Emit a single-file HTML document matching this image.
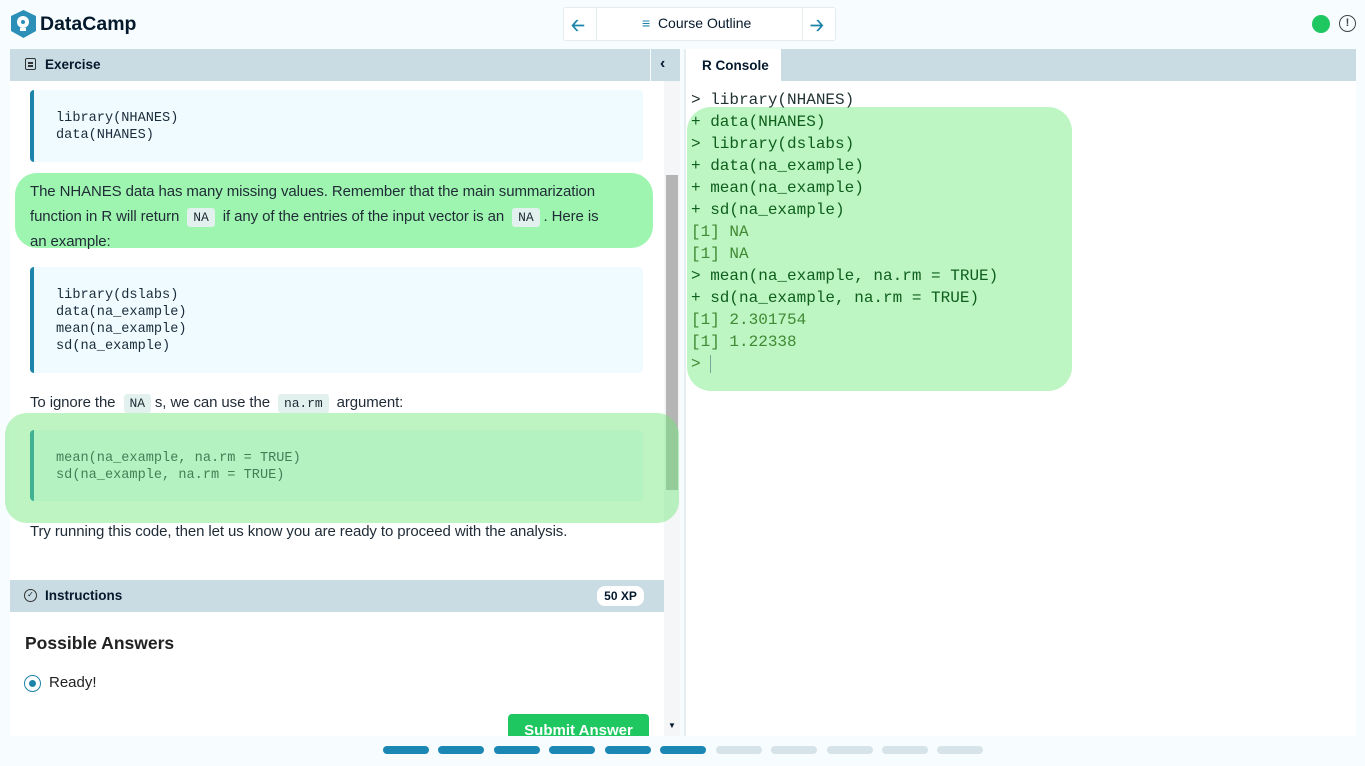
<!DOCTYPE html>
<html><head><meta charset="utf-8"><style>
*{box-sizing:border-box;margin:0;padding:0}
body{width:1365px;height:766px;overflow:hidden;background:#f7fdfe;font-family:"Liberation Sans",sans-serif;color:#05192d;position:relative}
.abs{position:absolute}
.hdr{background:#c9dce3}
.code{position:absolute;left:30px;width:613px;background:#effbfe;border-left:4px solid #1c84a9;border-radius:4px;font-family:"Liberation Mono",monospace;font-size:13.6px;line-height:17px;padding:0 0 0 22px;color:#1a2b3a;white-space:pre}
.p{position:absolute;left:30px;font-size:15px;line-height:25px;white-space:nowrap;color:#1f2b36;letter-spacing:-0.1px}
.na{font-family:"Liberation Mono",monospace;font-size:13px;background:#e3f1ee;padding:2px 6px;border-radius:3px;margin:0 4px}
.con{position:absolute;left:691px;font-family:"Liberation Mono",monospace;font-size:16px;line-height:22px;white-space:pre;color:#233}
.bar{position:absolute;top:746px;width:46px;height:8px;border-radius:4px}
</style></head><body>
<svg class="abs" style="left:10px;top:9px" width="27" height="30" viewBox="0 0 27 30"><path d="M13.5 1 L26 7 V22 L13.5 29 L1 22 V7Z" fill="#2b8fb7"/><circle cx="13" cy="13" r="6" fill="#fff"/><path d="M10 19h6v3h-6z" fill="#fff"/><circle cx="13" cy="13" r="2" fill="#2b8fb7"/></svg>
<div class="abs" style="left:40px;top:13px;font-size:19.5px;font-weight:bold;color:#05192d">DataCamp</div>
<div class="abs" style="left:563px;top:7px;width:273px;height:34px;border:1px solid #e4ecef;background:#fff;border-radius:3px"></div>
<div class="abs" style="left:596px;top:8px;width:1px;height:32px;background:#e4ecef"></div>
<div class="abs" style="left:802px;top:8px;width:1px;height:32px;background:#e4ecef"></div>
<div class="abs" style="left:571px;top:13px;color:#1c84a9;font-size:17px;font-weight:bold">&#129120;</div>
<div class="abs" style="left:810px;top:13px;color:#1c84a9;font-size:17px;font-weight:bold">&#129122;</div>
<div class="abs" style="left:642px;top:15px;font-size:14px;color:#05192d"><span style="color:#1c84a9">&#8801;</span>&nbsp; Course Outline</div>
<div class="abs" style="left:1312px;top:15px;width:18px;height:18px;border-radius:50%;background:#1ec760"></div>
<div class="abs" style="left:1339px;top:15px;width:17px;height:17px;border-radius:50%;border:1.5px solid #444;font-size:11px;text-align:center;line-height:14px;font-weight:bold;color:#444">!</div>
<div class="abs hdr" style="left:10px;top:49px;width:640px;height:32px"></div>
<div class="abs hdr" style="left:651px;top:49px;width:29px;height:32px"></div>
<div class="abs" style="left:660px;top:55px;font-size:16px;font-weight:bold">&#8249;</div>
<div class="abs" style="left:25px;top:58px;width:11px;height:12px;border:1.5px solid #333;border-radius:2px"></div>
<div class="abs" style="left:28px;top:62px;width:5px;height:1.5px;background:#333"></div>
<div class="abs" style="left:28px;top:65px;width:5px;height:1.5px;background:#333"></div>
<div class="abs" style="left:45px;top:57px;font-size:13.5px;font-weight:bold">Exercise</div>
<div class="abs" style="left:10px;top:81px;width:654px;height:655px;background:#fff"></div>
<div class="abs" style="left:664px;top:81px;width:16px;height:655px;background:#f4f6f7"></div>
<div class="abs" style="left:666px;top:175px;width:12px;height:315px;background:#b5b5b5"></div>
<div class="abs" style="left:668px;top:721px;font-size:8px">&#9660;</div>
<div class="abs" style="left:684px;top:49px;width:2px;height:690px;background:#e6eef1"></div>
<div class="code" style="top:90px;height:72px;padding-top:20px">library(NHANES)
data(NHANES)</div>
<div class="abs" style="left:15px;top:173px;width:638px;height:75px;background:#9ef5b0;border-radius:22px"></div>
<div class="p" style="top:179px">The NHANES data has many missing values. Remember that the main summarization</div>
<div class="p" style="top:204px">function in R will return <span class="na">NA</span> if any of the entries of the input vector is an <span class="na">NA</span>. Here is</div>
<div class="p" style="top:229px">an example:</div>
<div class="code" style="top:267px;height:106px;padding-top:20px">library(dslabs)
data(na_example)
mean(na_example)
sd(na_example)</div>
<div class="p" style="top:390px">To ignore the <span class="na">NA</span>s, we can use the <span class="na">na.rm</span> argument:</div>
<div class="code" style="top:430px;height:71px;padding-top:20px">mean(na_example, na.rm = TRUE)
sd(na_example, na.rm = TRUE)</div>
<div class="abs" style="left:5px;top:413px;width:674px;height:110px;background:rgba(110,230,120,0.45);border-radius:22px"></div>
<div class="p" style="top:519px">Try running this code, then let us know you are ready to proceed with the analysis.</div>
<div class="abs hdr" style="left:10px;top:580px;width:654px;height:32px"></div>
<div class="abs" style="left:24px;top:589px;width:13px;height:13px;border:1.5px solid #333;border-radius:50%;font-size:8px;text-align:center;line-height:10px">&#10003;</div>
<div class="abs" style="left:45px;top:588px;font-size:13.5px;font-weight:bold">Instructions</div>
<div class="abs" style="left:597px;top:586px;width:47px;height:20px;background:#fff;border-radius:8px;font-size:12px;font-weight:bold;text-align:center;line-height:20px">50 XP</div>
<div class="abs" style="left:25px;top:633px;font-size:17.5px;font-weight:bold;color:#222">Possible Answers</div>
<div class="abs" style="left:24px;top:675px;width:17px;height:17px;border-radius:50%;border:1.5px solid #1c84a9;background:#fff"></div>
<div class="abs" style="left:29px;top:680px;width:7px;height:7px;border-radius:50%;background:#1c84a9"></div>
<div class="abs" style="left:49px;top:674px;font-size:15px;color:#222">Ready!</div>
<div class="abs" style="left:508px;top:714px;width:141px;height:22px;background:#1ec760;border-radius:4px 4px 0 0;overflow:hidden;color:#fff;font-weight:bold;font-size:15px;text-align:center;padding-top:8px">Submit Answer</div>
<div class="abs" style="left:0;top:736px;width:1365px;height:30px;background:#f7fdfe"></div>
<div class="abs hdr" style="left:686px;top:49px;width:670px;height:32px"></div>
<div class="abs" style="left:686px;top:49px;width:95px;height:32px;background:#fff;font-size:13.5px;font-weight:bold;padding:9px 0 0 16px">R Console</div>
<div class="abs" style="left:686px;top:81px;width:670px;height:655px;background:#fff"></div>
<div class="abs" style="left:687px;top:107px;width:385px;height:284px;background:#bdf5c3;border-radius:24px"></div>
<div class="con" style="top:89px">&gt; library(NHANES)
<span style="color:#0e5f1c">+ data(NHANES)
&gt; library(dslabs)
+ data(na_example)
+ mean(na_example)
+ sd(na_example)</span>
<span style="color:#3f8a33">[1] NA
[1] NA</span>
<span style="color:#0e5f1c">&gt; mean(na_example, na.rm = TRUE)
+ sd(na_example, na.rm = TRUE)</span>
<span style="color:#3f8a33">[1] 2.301754
[1] 1.22338
&gt; </span><span style="border-left:1px solid #7a9">&nbsp;</span></div>
<div class="bar" style="left:383px;background:#1b87b3"></div>
<div class="bar" style="left:438px;background:#1b87b3"></div>
<div class="bar" style="left:494px;background:#1b87b3"></div>
<div class="bar" style="left:549px;background:#1b87b3"></div>
<div class="bar" style="left:605px;background:#1b87b3"></div>
<div class="bar" style="left:660px;background:#1b87b3"></div>
<div class="bar" style="left:716px;background:#d6e3e9"></div>
<div class="bar" style="left:771px;background:#d6e3e9"></div>
<div class="bar" style="left:827px;background:#d6e3e9"></div>
<div class="bar" style="left:882px;background:#d6e3e9"></div>
<div class="bar" style="left:937px;background:#d6e3e9"></div>
</body></html>
